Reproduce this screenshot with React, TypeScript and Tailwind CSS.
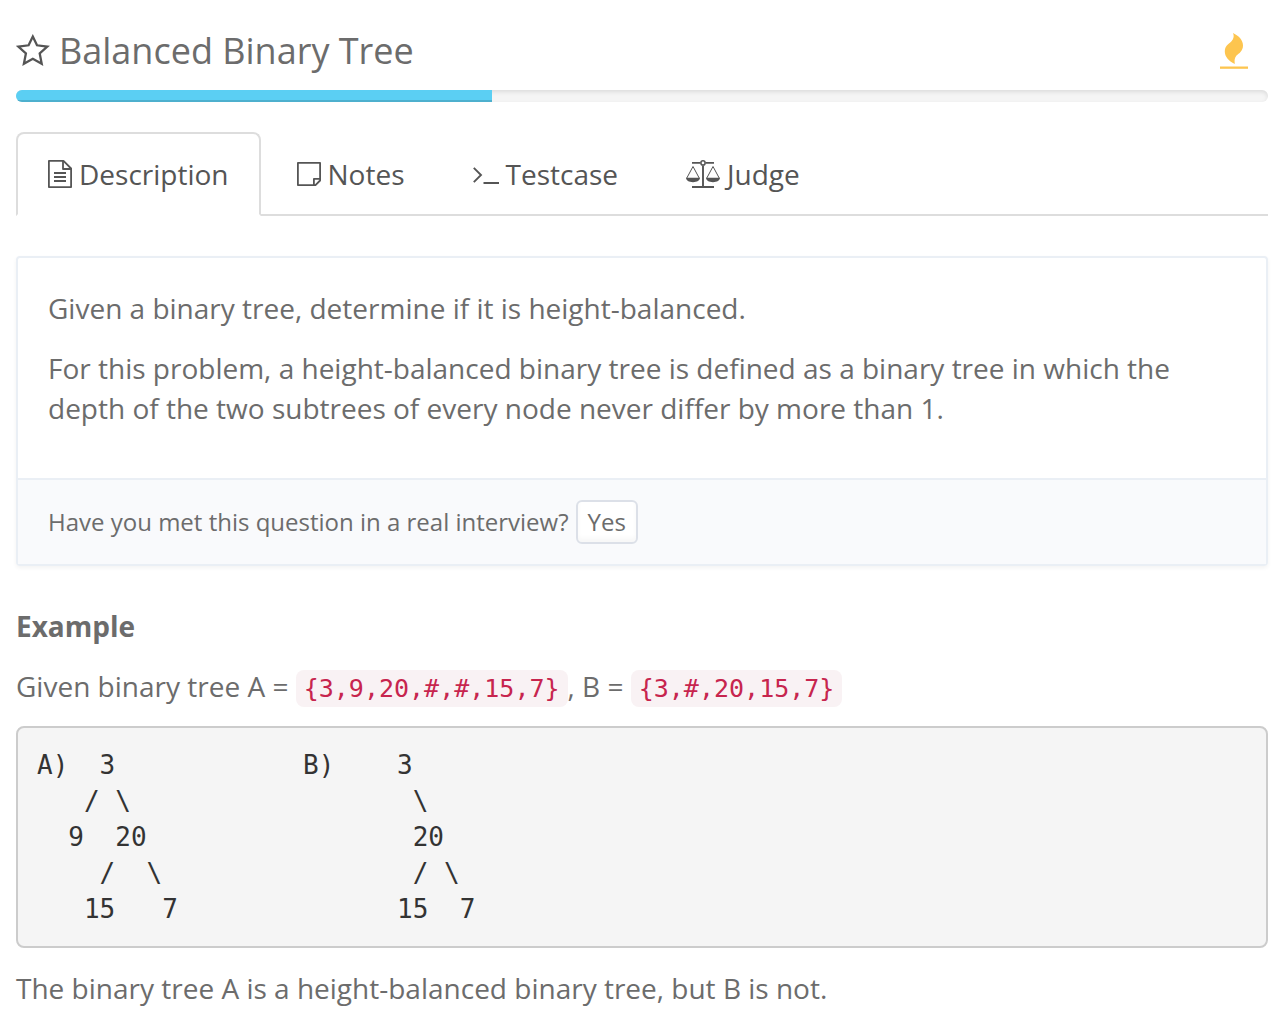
import type { ReactNode } from 'react';

function StarIcon() {
  return (
    <svg viewBox="0 0 34 34" className="h-[34px] w-[34px]" fill="none" stroke="#555" strokeWidth="2.3" aria-hidden="true">
      <path d="M16.800 2.600 21 11.300 31.300 12.600 23.700 19.500 25.700 29.800 16.800 24.800 7.900 29.800 9.900 19.500 2.300 12.600 12.600 11.300Z" />
    </svg>
  );
}

function FlameIcon() {
  return (
    <svg viewBox="0 0 28 36" className="h-9 w-7" fill="#fdc54f" aria-hidden="true">
      <path d="M13 0C19 3 23 7 23 12.500C23 18 19 20.500 16.500 22.500Q13.800 25.500 14.800 31C8.500 28 4.800 23.500 4.800 18.500C4.800 13 8 11.500 11.500 8.200Q15 4.500 13 0Z" />
      <path d="M0 33.500H28V35.800H0Z" />
    </svg>
  );
}

function DocumentIcon() {
  return (
    <svg viewBox="0 0 24 28" className="h-7 w-6" fill="none" stroke="#555" strokeWidth="1.800" strokeLinejoin="round" aria-hidden="true">
      <path d="M0.900 0.900H15.500L23.100 8.500V27.100H0.900Z" />
      <path d="M15 1V9H23M6 13H18M6 17H18M6 21H18" />
    </svg>
  );
}

function NoteIcon() {
  return (
    <svg viewBox="0 0 24 28" className="h-7 w-6" fill="none" stroke="#555" strokeWidth="1.800" strokeLinejoin="round" aria-hidden="true">
      <path d="M0.900 2.900H23.100V20.500L18.500 25.100H0.900Z" />
      <path d="M23 18.900H16.900V25" />
    </svg>
  );
}

function TerminalIcon() {
  return (
    <svg viewBox="0 0 26 28" className="h-7 w-[26px]" fill="none" stroke="#555" strokeWidth="1.900" aria-hidden="true">
      <path d="M0.800 7.800 8 15 0.800 22.200M10.500 23H26" />
    </svg>
  );
}

function ScalesIcon() {
  return (
    <svg viewBox="0 0 34 28" className="h-7 w-[34px]" fill="none" stroke="#555" aria-hidden="true">
      <path d="M6 2.900H14.500M19.500 2.900H28M17 5.500V27M6 27H28" strokeWidth="1.900" />
      <circle cx="17" cy="2.900" r="2.100" strokeWidth="1.500" />
      <path d="M0.800 18 7 6.500 13.200 18M20.800 18 27 6.500 33.200 18" strokeWidth="1" />
      <path d="M0 17.800H14C14 20.500 11 22.200 7 22.200S0 20.500 0 17.800ZM20 17.800H34C34 20.500 31 22.200 27 22.200S20 20.500 20 17.800Z" fill="#555" stroke="none" />
    </svg>
  );
}

function Tab({ icon, label, active = false }: { icon: ReactNode; label: string; active?: boolean }) {
  return (
    <a
      href="#"
      role="tab"
      aria-selected={active}
      className={
        active
          ? '-mb-0.5 flex items-center gap-[7px] rounded-t-lg border-2 border-[#ddd] border-b-white bg-white px-[30px] py-5'
          : '-mb-0.5 flex items-center gap-[7px] rounded-t-lg border-2 border-transparent px-[30px] py-5'
      }
    >
      {icon}
      {label}
    </a>
  );
}

function Code({ children }: { children: string }) {
  return (
    <code className="rounded-lg bg-[#f9f2f4] px-2 py-1 font-['DejaVu_Sans_Mono',monospace] text-[25px] leading-none text-[#c7254e]">
      {children}
    </code>
  );
}

const trees = String.raw`A)  3            B)    3
   / \                  \
  9  20                 20
    /  \                / \
   15   7              15  7`;

export default function App() {
  return (
    <main className="min-h-screen bg-white px-4 pt-[26px] pr-[18px] pb-4 font-['Open_Sans',sans-serif] text-[28px] leading-10 text-[#6c6c6c]">
      <header className="flex items-center justify-between pr-5">
        <h1 className="flex items-center gap-[9px] text-[36px] leading-[50px]">
          <StarIcon />
          Balanced Binary Tree
        </h1>
        <FlameIcon />
      </header>

      <div
        role="progressbar"
        aria-label="Acceptance rate"
        aria-valuenow={38}
        aria-valuemin={0}
        aria-valuemax={100}
        className="mt-3.5 h-3 overflow-hidden rounded-full bg-[#f5f5f5] shadow-[inset_0_2px_4px_rgba(0,0,0,0.1)]"
      >
        <div className="h-full w-[38%] bg-[#5bcff3] shadow-[inset_0_-2px_0_rgba(0,0,0,0.15)]" />
      </div>

      <nav role="tablist" className="mt-[30px] flex gap-1 border-b-2 border-[#ddd] text-[#555]">
        <Tab icon={<DocumentIcon />} label="Description" active />
        <Tab icon={<NoteIcon />} label="Notes" />
        <Tab icon={<TerminalIcon />} label="Testcase" />
        <Tab icon={<ScalesIcon />} label="Judge" />
      </nav>

      <section className="mt-10 rounded border-2 border-[#eaeff5] shadow-[0_2px_4px_rgba(0,0,0,0.05)]">
        <div className="flex flex-col gap-5 px-[30px] pt-[30px] pb-[50px]">
          <p>Given a binary tree, determine if it is height-balanced.</p>
          <p>
            For this problem, a height-balanced binary tree is defined as a binary tree in which the depth of the two
            subtrees of every node never differ by more than 1.
          </p>
        </div>
        <div className="flex items-center gap-[7px] border-t-2 border-[#eaeff5] bg-[#f9fafc] px-[30px] py-5 text-2xl">
          <span>Have you met this question in a real interview?</span>
          <button
            type="button"
            className="h-11 rounded-md border-2 border-[#dce0e8] bg-white px-2.5 leading-10 shadow-[inset_0_-4px_4px_rgba(0,0,0,0.03)]"
          >
            Yes
          </button>
        </div>
      </section>

      <h2 className="mt-10 font-bold">Example</h2>
      <p className="mt-5">
        Given binary tree A = <Code>{'{3,9,20,#,#,15,7}'}</Code>, B = <Code>{'{3,#,20,15,7}'}</Code>
      </p>
      <pre className="mt-5 overflow-x-auto rounded-lg border-2 border-[#ccc] bg-[#f5f5f5] p-[19px] font-['DejaVu_Sans_Mono',monospace] text-[26px] leading-9 text-[#333]">
        {trees}
      </pre>
      <p className="mt-5">The binary tree A is a height-balanced binary tree, but B is not.</p>
    </main>
  );
}
